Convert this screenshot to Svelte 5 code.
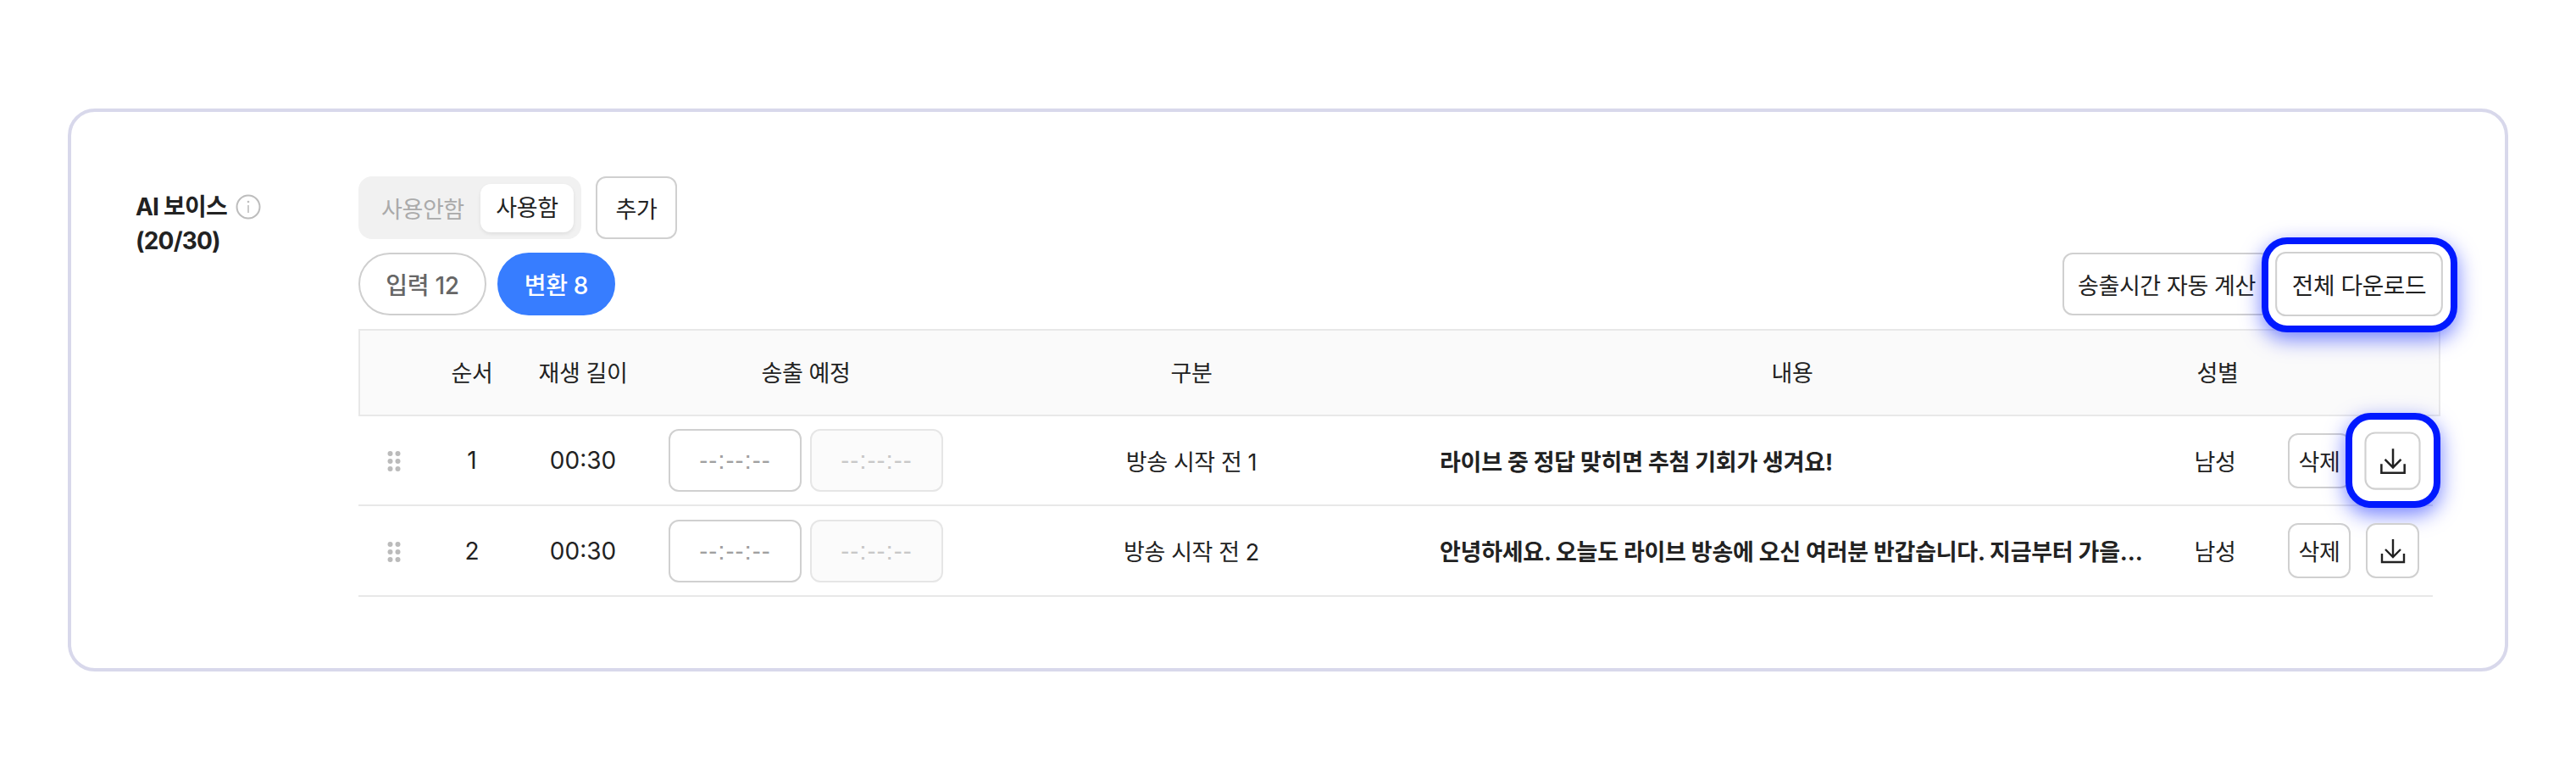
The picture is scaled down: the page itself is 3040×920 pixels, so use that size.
<script>
  const rows = [
    { order: 1, length: '00:30', part: '방송 시작 전 1', text: '라이브 중 정답 맞히면 추첨 기회가 생겨요!', gender: '남성', marked: true },
    { order: 2, length: '00:30', part: '방송 시작 전 2', text: '안녕하세요. 오늘도 라이브 방송에 오신 여러분 반갑습니다. 지금부터 가을…', gender: '남성', marked: false }
  ];
  const dots = [6, 15, 24];
</script>

<div class="page">
  <section class="card">
    <div class="label">
      <div class="label-line">
        AI 보이스
        <svg class="info" width="30" height="30" viewBox="0 0 30 30" fill="none">
          <circle cx="15" cy="15" r="13.5" stroke="#bdbdbd" stroke-width="2" />
          <circle cx="15" cy="9" r="1.3" fill="#bdbdbd" />
          <path d="M15 13v9" stroke="#bdbdbd" stroke-width="1.6" />
        </svg>
      </div>
      <div class="label-line">(20/30)</div>
    </div>

    <div class="content">
      <div class="controls">
        <div class="toggle">
          <span class="toggle-off">사용안함</span>
          <span class="toggle-on">사용함</span>
        </div>
        <button class="btn add" type="button">추가</button>
      </div>

      <div class="toolbar">
        <div class="tabs">
          <button class="tab" type="button">입력 12</button>
          <button class="tab active" type="button">변환 8</button>
        </div>
        <div class="tools">
          <button class="btn auto" type="button">송출시간 자동 계산</button>
          <div class="marked">
            <span class="frame frame-all"></span>
            <button class="btn all" type="button">전체 다운로드</button>
          </div>
        </div>
      </div>

      <div class="grid head">
        <span></span>
        <span>순서</span>
        <span>재생 길이</span>
        <span>송출 예정</span>
        <span>구분</span>
        <span>내용</span>
        <span>성별</span>
        <span></span>
      </div>

      {#each rows as row}
        <div class="grid row">
          <svg class="drag" width="16" height="28" viewBox="0 0 16 28">
            {#each dots as y}
              <circle cx="3.5" cy={y} r="3" fill="#bbb" />
              <circle cx="12.5" cy={y} r="3" fill="#bbb" />
            {/each}
          </svg>
          <span class="num">{row.order}</span>
          <span class="num">{row.length}</span>
          <div class="times">
            <input class="time" type="text" placeholder="--:--:--" />
            <input class="time" type="text" placeholder="--:--:--" disabled />
          </div>
          <span>{row.part}</span>
          <span class="script">{row.text}</span>
          <span class="gender">{row.gender}</span>
          <div class="actions">
            <button class="btn del" type="button">삭제</button>
            <div class="marked">
              {#if row.marked}<span class="frame frame-icon"></span>{/if}
              <button class="btn icon" class:big={row.marked} type="button" aria-label="다운로드">
                <svg width="30" height="30" viewBox="0 0 30 30" fill="none" stroke="#222" stroke-width="2.4">
                  <path d="M15 1v21M6 13l9 9 9-9" />
                  <path d="M2 18v10h26V18" />
                </svg>
              </button>
            </div>
          </div>
        </div>
      {/each}
    </div>
  </section>
</div>

<style>
  :global(body) {
    margin: 0;
    background: #fff;
  }

  .page {
    padding: 128px 80px;
    font-family: Inter, 'Noto Sans CJK KR', sans-serif;
    font-size: 27px;
    letter-spacing: -0.4px;
    color: #222;
  }

  .card {
    display: flex;
    box-sizing: border-box;
    height: 664px;
    padding: 76px 77px 0 76px;
    border: 4px solid #d8d8eb;
    border-radius: 32px;
  }

  /* Label column */
  .label {
    width: 263px;
    flex: none;
    padding-top: 16px;
    font-size: 28px;
    font-weight: 700;
    line-height: 40px;
    letter-spacing: -0.8px;
  }

  .label-line {
    display: flex;
    align-items: center;
    gap: 10px;
  }

  .info {
    flex: none;
  }

  .content {
    flex: 1;
    min-width: 0;
  }

  /* Controls */
  .controls {
    display: flex;
    gap: 17px;
    margin-bottom: 16px;
  }

  .toggle {
    box-sizing: border-box;
    display: flex;
    align-items: center;
    justify-content: space-between;
    width: 263px;
    height: 74px;
    padding: 0 9px 0 27px;
    background: #f1f1f1;
    border-radius: 16px;
  }

  .toggle-off {
    color: #aaa;
  }

  .toggle-on {
    width: 110px;
    height: 57px;
    line-height: 57px;
    text-align: center;
    background: #fff;
    border-radius: 12px;
    box-shadow: 0 2px 4px rgba(0, 0, 0, 0.08);
  }

  .btn {
    box-sizing: border-box;
    height: 74px;
    padding: 0;
    font: inherit;
    letter-spacing: inherit;
    color: #222;
    background: #fff;
    border: 2px solid #d0d0d0;
    border-radius: 12px;
  }

  .add {
    width: 96px;
  }

  /* Toolbar */
  .toolbar {
    display: flex;
    justify-content: space-between;
    margin-bottom: 16px;
  }

  .tabs {
    display: flex;
    gap: 13px;
  }

  .tab {
    box-sizing: border-box;
    width: 151px;
    height: 74px;
    padding: 0;
    font: inherit;
    font-weight: 500;
    font-size: 28px;
    letter-spacing: -0.3px;
    color: #666;
    background: #fff;
    border: 2px solid #cfcfcf;
    border-radius: 37px;
  }

  .tab.active {
    width: 139px;
    color: #fff;
    background: #377dff;
    border-color: #377dff;
  }

  .tools {
    display: flex;
    gap: 8px;
    margin-right: -1px;
  }

  .auto {
    width: 246px;
  }

  .all {
    width: 192px;
    transform: scale(1.03);
  }

  /* Highlight frames sit over the neighbouring controls */
  .marked {
    position: relative;
    display: flex;
  }

  .marked .btn {
    position: relative;
  }

  .frame {
    position: absolute;
    background: #fff;
    border: 8px solid #0019ff;
    box-shadow: 0 8px 24px rgba(0, 25, 255, 0.55);
  }

  .frame-all {
    inset: -18px -20px -20px -19px;
    border-radius: 30px;
  }

  .frame-icon {
    inset: -24px -25px -23px -24px;
    border-radius: 30px;
  }

  /* Table */
  .grid {
    display: grid;
    grid-template-columns: 84px 100px 162px 364px 546px 872px 132px 196px;
    align-items: center;
    text-align: center;
  }

  .head {
    box-sizing: border-box;
    height: 103px;
    margin-right: -1px;
    padding-bottom: 3px;
    grid-template-columns: 82px 100px 162px 364px 546px 872px 132px 194px;
    background: #fafafa;
    border: 2px solid #e8e8e8;
  }

  .row {
    box-sizing: border-box;
    height: 106px;
    margin-right: 8px;
    border-bottom: 2px solid #e8e8e8;
  }

  .row:last-child {
    height: 107px;
  }

  .num {
    font-size: 28px;
    letter-spacing: 0;
  }

  .drag {
    justify-self: center;
  }

  .times {
    display: flex;
    justify-content: center;
    gap: 10px;
  }

  .time {
    box-sizing: border-box;
    width: 157px;
    height: 74px;
    padding: 0;
    font-family: 'Liberation Sans', sans-serif;
    font-size: 30px;
    letter-spacing: 1px;
    text-align: center;
    background: #fff;
    border: 2px solid #d0d0d0;
    border-radius: 12px;
  }

  .time::placeholder {
    color: #a0a0a0;
    opacity: 1;
  }

  .time:disabled {
    background: #fbfbfb;
    border-color: #e6e6e6;
  }

  .time:disabled::placeholder {
    color: #c8c8c8;
  }

  .script {
    padding-left: 20px;
    font-weight: 700;
    letter-spacing: -0.25px;
    text-align: left;
    white-space: nowrap;
  }

  .gender {
    padding-right: 6px;
  }

  .actions {
    display: flex;
    gap: 18px;
    padding-left: 17px;
  }

  .del {
    width: 74px;
    height: 65px;
  }

  .icon {
    display: flex;
    align-items: center;
    justify-content: center;
    width: 63px;
    height: 65px;
  }

  .icon.big {
    transform: scale(1.05);
  }
</style>
